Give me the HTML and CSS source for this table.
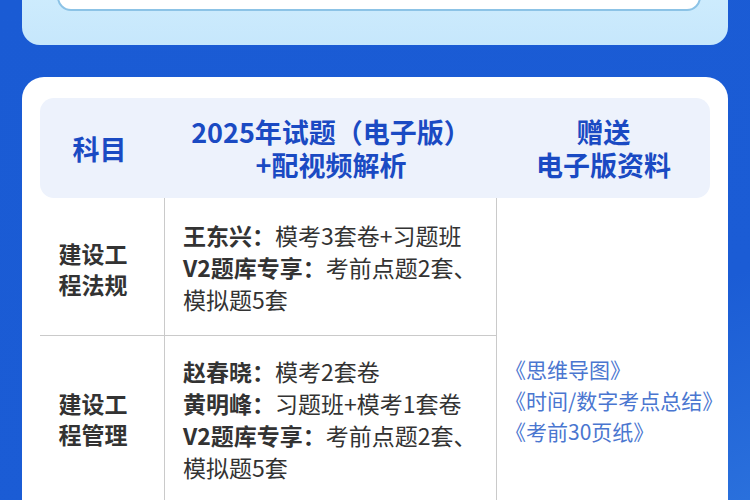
FILE: index.html
```html
<!DOCTYPE html>
<html lang="zh-CN">
<head>
<meta charset="utf-8">
<link rel="stylesheet" href="styles.css">
</head>
<body>
<div class="page">
  <div class="top-card">
    <div class="top-inner"></div>
  </div>
  <div class="table-card">
    <div class="thead">
      <div class="th th-subject">科目</div>
      <div class="th">2025年试题（电子版）<br>+配视频解析</div>
      <div class="th">赠送<br>电子版资料</div>
    </div>
    <div class="tbody">
      <div class="cell subject row1">建设工<br>程法规</div>
      <div class="cell detail row1">
        <p><b>王东兴：</b>模考3套卷+习题班</p>
        <p><b>V2题库专享：</b>考前点题2套、</p>
        <p>模拟题5套</p>
      </div>
      <div class="cell gift">
        <p>《思维导图》</p>
        <p>《时间/数字考点总结》</p>
        <p>《考前30页纸》</p>
      </div>
      <div class="cell subject row2">建设工<br>程管理</div>
      <div class="cell detail">
        <p><b>赵春晓：</b>模考2套卷</p>
        <p><b>黄明峰：</b>习题班+模考1套卷</p>
        <p><b>V2题库专享：</b>考前点题2套、</p>
        <p>模拟题5套</p>
      </div>
    </div>
  </div>
</div>
</body>
</html>
```

FILE: styles.css
```css
* { box-sizing: border-box; }
html, body { margin: 0; padding: 0; }
body {
  width: 750px;
  height: 500px;
  overflow: hidden;
  background: linear-gradient(160deg, #1a5bd4 0%, #1b5cd5 70%, #2a70dc 100%);
  font-family: "Noto Sans CJK SC", "Noto Sans", sans-serif;
}
.page {
  display: flex;
  flex-direction: column;
  gap: 32px;
  padding: 0 22px;
}
.top-card {
  margin-top: -60px;
  height: 105px;
  background: linear-gradient(180deg, #d6f1fe 0%, #c6e7fc 100%);
  border-radius: 0 0 18px 18px;
  padding: 0 27px 0 35px;
}
.top-inner {
  height: 71px;
  background: #fff;
  border: 2px solid #8cc3e6;
  border-radius: 0 0 14px 14px;
}
.table-card {
  background: #fff;
  border-radius: 22px 22px 0 0;
  padding: 21px 18px 0 18px;
  height: 450px;
}
.thead {
  display: grid;
  grid-template-columns: 125px 332px 213px;
  height: 100px;
  background: #edf2fc;
  border-radius: 14px;
  align-items: center;
}
.th {
  text-align: center;
  color: #1a4ac3;
  font-weight: 700;
  font-size: 27px;
  line-height: 33px;
  white-space: nowrap;
}
.th-subject { padding-right: 6px; }
.tbody {
  display: grid;
  grid-template-columns: 125px 332px 213px;
  grid-template-rows: 138px 166px;
}
.cell { display: flex; flex-direction: column; justify-content: center; }
.cell p { margin: 0; }
.subject {
  align-items: center;
  text-align: center;
  font-weight: 700;
  font-size: 23px;
  line-height: 31px;
  color: #333;
  border-right: 1px solid #cacaca;
  padding: 4px 18px 0 0;
}
.subject.row2 { padding-top: 0; }
.detail {
  padding-left: 18px;
  font-size: 23px;
  line-height: 32px;
  color: #333;
  border-right: 1px solid #cacaca;
  white-space: nowrap;
}
.detail b { font-weight: 700; }
.row1 { border-bottom: 1px solid #cacaca; }
.gift {
  grid-column: 3;
  grid-row: 1 / span 2;
  justify-content: flex-start;
  padding: 156px 0 0 8px;
  font-size: 21px;
  line-height: 31px;
  color: #4a76d0;
  white-space: nowrap;
}
```
